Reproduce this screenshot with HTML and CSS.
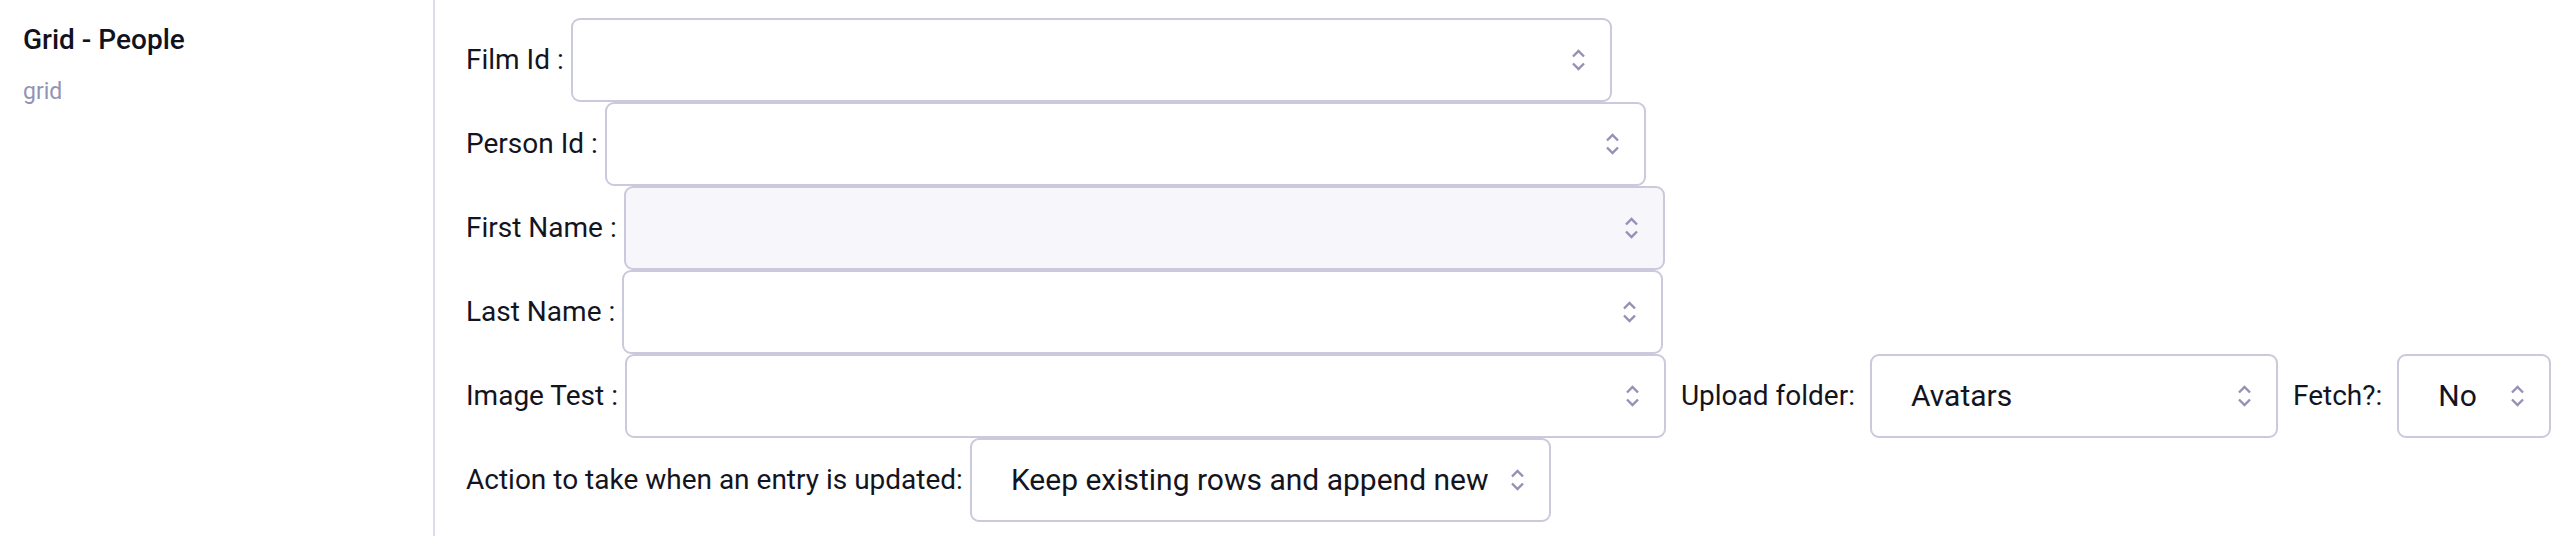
FILE: index.html
```html
<!DOCTYPE html>
<html>
<head>
<meta charset="utf-8">
<link rel="stylesheet" href="styles.css">
</head>
<body>
<div class="page">
  <aside class="side">
    <div class="title">Grid - People</div>
    <div class="subtitle">grid</div>
  </aside>
  <main class="form">
    <div class="row">
      <div class="field"><label class="lbl">Film Id :</label>
        <div class="sel wide"><span class="val"></span><svg class="chev" viewBox="0 0 13 22"><path d="M1 7.5 L6.5 2 L12 7.5 M1 14.5 L6.5 20 L12 14.5"/></svg></div>
      </div>
    </div>
    <div class="row">
      <div class="field"><label class="lbl">Person Id :</label>
        <div class="sel wide"><span class="val"></span><svg class="chev" viewBox="0 0 13 22"><path d="M1 7.5 L6.5 2 L12 7.5 M1 14.5 L6.5 20 L12 14.5"/></svg></div>
      </div>
    </div>
    <div class="row">
      <div class="field"><label class="lbl">First Name :</label>
        <div class="sel wide tinted"><span class="val"></span><svg class="chev" viewBox="0 0 13 22"><path d="M1 7.5 L6.5 2 L12 7.5 M1 14.5 L6.5 20 L12 14.5"/></svg></div>
      </div>
    </div>
    <div class="row">
      <div class="field"><label class="lbl">Last Name :</label>
        <div class="sel wide"><span class="val"></span><svg class="chev" viewBox="0 0 13 22"><path d="M1 7.5 L6.5 2 L12 7.5 M1 14.5 L6.5 20 L12 14.5"/></svg></div>
      </div>
    </div>
    <div class="row multi">
      <div class="field"><label class="lbl">Image Test :</label>
        <div class="sel wide"><span class="val"></span><svg class="chev" viewBox="0 0 13 22"><path d="M1 7.5 L6.5 2 L12 7.5 M1 14.5 L6.5 20 L12 14.5"/></svg></div>
      </div>
      <div class="field"><label class="lbl sp">Upload folder:</label>
        <div class="sel folder"><span class="val">Avatars</span><svg class="chev" viewBox="0 0 13 22"><path d="M1 7.5 L6.5 2 L12 7.5 M1 14.5 L6.5 20 L12 14.5"/></svg></div>
      </div>
      <div class="field"><label class="lbl sp">Fetch?:</label>
        <div class="sel fetch"><span class="val">No</span><svg class="chev" viewBox="0 0 13 22"><path d="M1 7.5 L6.5 2 L12 7.5 M1 14.5 L6.5 20 L12 14.5"/></svg></div>
      </div>
    </div>
    <div class="row">
      <div class="field"><label class="lbl act">Action to take when an entry is updated:</label>
        <div class="sel"><span class="val">Keep existing rows and append new</span><svg class="chev" viewBox="0 0 13 22"><path d="M1 7.5 L6.5 2 L12 7.5 M1 14.5 L6.5 20 L12 14.5"/></svg></div>
      </div>
    </div>
  </main>
</div>
</body>
</html>
```

FILE: styles.css
```css
html, body {
  margin: 0;
  padding: 0;
  background: #ffffff;
}
body {
  font-family: Roboto, "Liberation Sans", sans-serif;
  color: #14141f;
}
.page {
  display: flex;
  min-height: 536px;
}
.side {
  width: 435px;
  flex: 0 0 435px;
  border-right: 2px solid #dcdeed;
  padding: 23px 0 0 23px;
  box-sizing: border-box;
}
.title {
  font-size: 28px;
  font-weight: 500;
  line-height: 34px;
  color: #12121c;
}
.subtitle {
  margin-top: 21px;
  font-size: 23px;
  line-height: 28px;
  color: #9492b6;
}
.form {
  flex: 1;
  padding: 18px 0 0 31px;
  display: flex;
  flex-direction: column;
}
.row {
  display: flex;
  align-items: center;
}
.multi {
  gap: 15px;
}
.field {
  display: flex;
  align-items: center;
}
.lbl {
  font-size: 28px;
  line-height: 34px;
  margin-right: 7px;
  white-space: nowrap;
}
.lbl.sp {
  margin-right: 15px;
}
.lbl.act {
  margin-right: 7px;
}
.sel {
  height: 84px;
  box-sizing: border-box;
  border: 2px solid #cbc9dc;
  border-radius: 9px;
  background: #ffffff;
  display: flex;
  align-items: center;
  padding: 0 25px 0 39px;
}
.sel.wide {
  width: 1041px;
}
.sel.folder {
  width: 408px;
}
.sel.fetch {
  width: 154px;
}
.sel.tinted {
  background: #f6f6fb;
}
.val {
  font-size: 30px;
  line-height: 36px;
  white-space: nowrap;
  color: #14141f;
}
.wide .val, .folder .val, .fetch .val {
  flex: 1;
}
.chev {
  width: 13px;
  height: 22px;
  margin-left: 22px;
  flex: 0 0 13px;
}
.chev path {
  fill: none;
  stroke: #9391b6;
  stroke-width: 2.4;
  stroke-linecap: butt;
  stroke-linejoin: miter;
}
```
